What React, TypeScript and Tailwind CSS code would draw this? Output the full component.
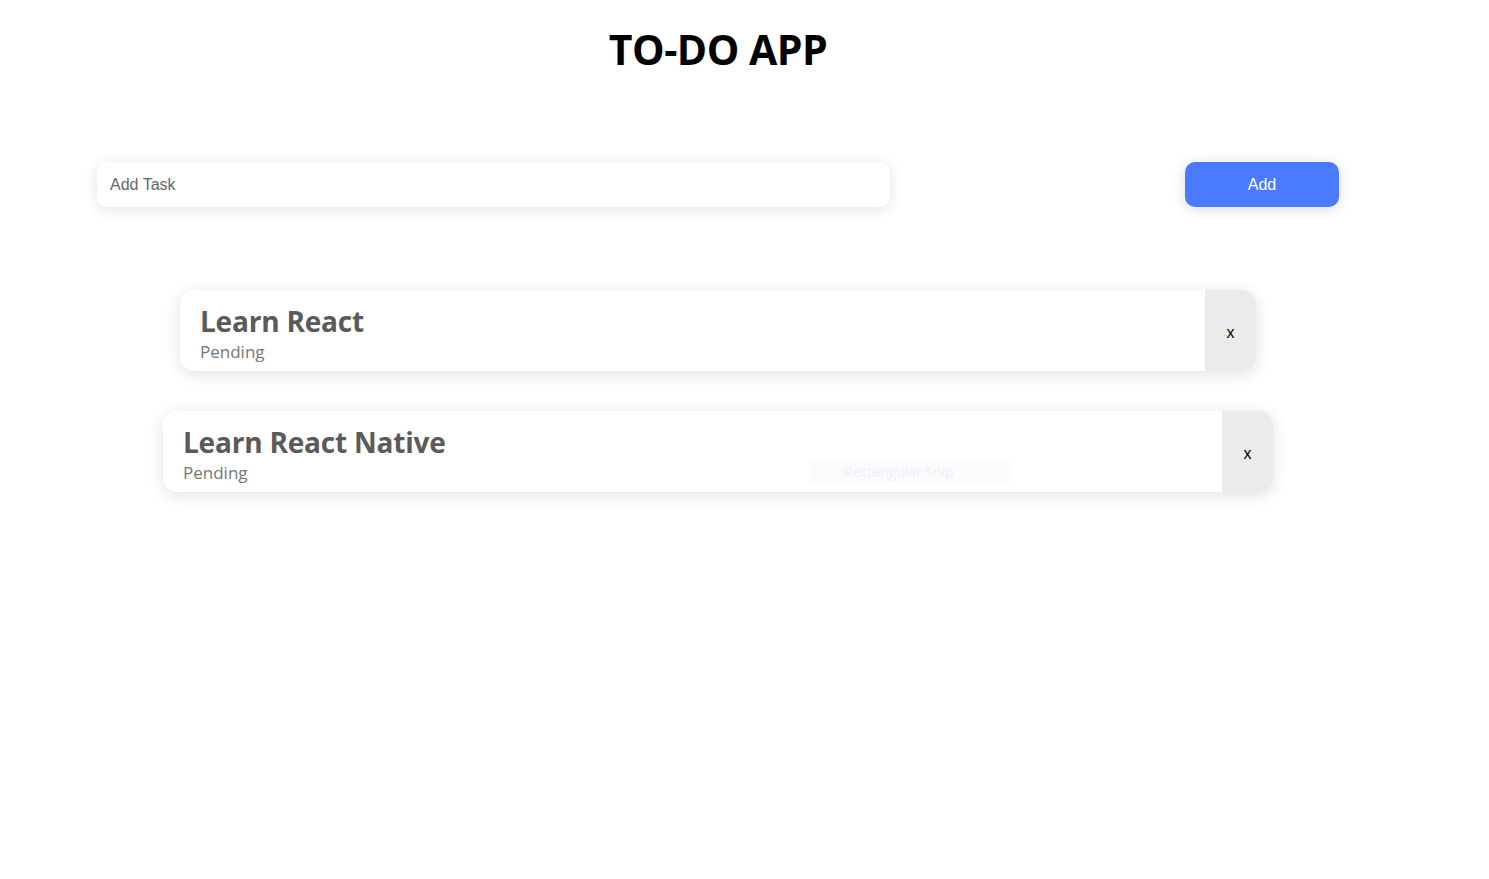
// @ts-nocheck
import React from 'react';

const tasks = [
  { title: 'Learn React', status: 'Pending', width: 'w-[1076px]' },
  { title: 'Learn React Native', status: 'Pending', width: 'w-[1110px]' },
];

const App = () => {
  return (
    <div className="min-h-[879px] bg-white w-[1436px] relative" style={{ fontFamily: '"Open Sans", "Noto Sans", sans-serif' }}>
      <h1 className="pt-[24px] text-center text-[41px] font-bold leading-[50px] text-black tracking-[-0.5px]">TO-DO APP</h1>

      <div className="mt-[88px] flex justify-between w-[1242px] mx-auto">
        <input
          placeholder="Add Task"
          className="w-[793px] h-[45px] rounded-[10px] bg-white px-[13px] text-[16px] text-[#555] placeholder:text-[#666] shadow-[0_2px_14px_rgba(0,0,0,0.12)] outline-none"
          style={{ fontFamily: '"Liberation Sans", Arial, sans-serif' }}
        />
        <button
          className="w-[154px] h-[45px] rounded-[10px] bg-[#4a7aff] text-white text-[16px] shadow-[0_2px_14px_rgba(0,0,0,0.15)]"
          style={{ fontFamily: '"Liberation Sans", Arial, sans-serif' }}
        >
          Add
        </button>
      </div>

      <div className="mt-[83px] flex flex-col items-center gap-[40px]">
        {tasks.map((t) => (
          <div
            key={t.title}
            className={`${t.width} h-[81px] flex rounded-[14px] bg-white shadow-[0_3px_16px_rgba(0,0,0,0.12)] overflow-hidden`}
          >
            <div className="flex-1 flex flex-col px-[20px] pt-[17px]">
              <div className="text-[28px] font-bold leading-[28px] text-[#5a5a5a] tracking-[-0.2px]">{t.title}</div>
              <div className="text-[17px] leading-[22px] mt-[6px] text-[#777]">{t.status}</div>
            </div>
            <button
              className="w-[51px] bg-[#ebebeb] text-[16px] text-black flex items-center justify-center pt-[4px]"
              style={{ fontFamily: '"Liberation Sans", Arial, sans-serif' }}
            >
              x
            </button>
          </div>
        ))}
      </div>

      <div className="absolute left-[810px] top-[460px] w-[202px] h-[23px] bg-[#fbfcfe] text-[#eef0f4] text-[14px] pl-[34px] leading-[23px]">
        Rectangular Snip
      </div>
    </div>
  );
};

export default App;
